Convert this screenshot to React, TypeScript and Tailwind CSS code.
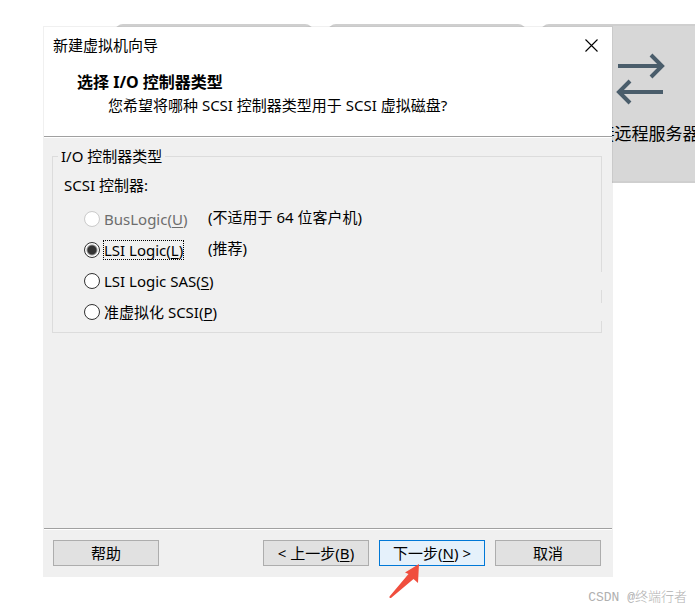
import { useState } from "react";
import type { ReactNode } from "react";

const buttonClassName =
  "h-[26px] w-[106px] shrink-0 border border-[#adadad] bg-[#e1e1e1] text-center leading-6 whitespace-nowrap";

interface ControllerOption {
  value: string;
  label: string;
  accessKey: string;
  note?: string;
  disabled?: boolean;
}

const controllers: ControllerOption[] = [
  {
    value: "buslogic",
    label: "BusLogic",
    accessKey: "U",
    note: "(不适用于 64 位客户机)",
    disabled: true,
  },
  { value: "lsilogic", label: "LSI Logic", accessKey: "L", note: "(推荐)" },
  { value: "lsisas", label: "LSI Logic SAS", accessKey: "S" },
  { value: "pvscsi", label: "准虚拟化 SCSI", accessKey: "P" },
];

function AccessKey({ children }: { children: ReactNode }) {
  return (
    <>
      (<span className="underline underline-offset-2">{children}</span>)
    </>
  );
}

function HomeTiles() {
  const tileClassName =
    "h-[159px] w-[198px] shrink-0 rounded-lg border-y-2 border-[#cfcfcf] bg-[#d7d7d7]";

  return (
    <div className="absolute inset-x-0 top-0 flex gap-[15px] overflow-hidden pt-6 pl-[115px]">
      <div className={tileClassName} />
      <div className={tileClassName} />
      <div className={`${tileClassName} flex flex-col items-center pt-6`}>
        <svg
          width="50"
          height="56"
          viewBox="0 0 50 56"
          fill="none"
          stroke="#4a5d6b"
          strokeWidth="4"
          aria-hidden="true"
        >
          <path d="M3 16H47M36 5l11 11-11 11" />
          <path d="M48 42H4M15 31L4 42l11 11" />
        </svg>
        <span className="mt-[14px] text-[17px] leading-7 text-black">
          连接远程服务器
        </span>
      </div>
    </div>
  );
}

function ControllerGroup() {
  const [selected, setSelected] = useState("lsilogic");

  return (
    <fieldset className="mr-[10px] ml-2 border border-[#dcdcdc] pb-[11px]">
      <legend className="ml-[5px] px-[3px] leading-5">I/O 控制器类型</legend>
      <p className="mt-[9px] ml-[11px] leading-5">SCSI 控制器:</p>
      <div className="mt-[15px] -mr-px ml-[31px] flex flex-col gap-[13px]">
        {controllers.map((item) => (
          <div
            key={item.value}
            className={`flex h-[18px] items-center ${item.note ? "" : "bg-[#f0f0f0]"}`}
          >
            <div className="flex w-[124px] shrink-0 items-center gap-[3px] whitespace-nowrap">
              <input
                id={`controller-${item.value}`}
                type="radio"
                name="controller"
                value={item.value}
                checked={selected === item.value}
                disabled={item.disabled}
                onChange={() => setSelected(item.value)}
                className="size-4 shrink-0 appearance-none rounded-full border border-[#333] bg-white bg-clip-padding outline-none checked:bg-[radial-gradient(circle,#333_4px,white_6px)] disabled:border-[#ccc]"
              />
              <label
                htmlFor={`controller-${item.value}`}
                className={`border border-dotted leading-[18px] ${
                  selected === item.value ? "border-black" : "border-transparent"
                } ${item.disabled ? "text-[#6d6d6d]" : ""}`}
              >
                {item.label}
                <AccessKey>{item.accessKey}</AccessKey>
              </label>
            </div>
            {item.note && <span className="pb-1">{item.note}</span>}
          </div>
        ))}
      </div>
    </fieldset>
  );
}

function ClickArrow() {
  return (
    <svg
      className="pointer-events-none absolute top-6 left-[9px]"
      width="34"
      height="36"
      viewBox="0 0 34 36"
      aria-hidden="true"
    >
      <path
        d="M31 0L17 8.500L20.500 10L1.500 32.500Q1 34.500 3 34L25.500 15L30 19Z"
        fill="#f04e3e"
      />
    </svg>
  );
}

function WizardDialog() {
  return (
    <div
      role="dialog"
      aria-labelledby="wizard-title"
      className="relative mr-[82px] ml-[43px] border border-black/6 bg-[#f0f0f0] bg-clip-padding"
    >
      <header className="border-b border-[#a0a0a0] bg-white pb-[19px]">
        <div className="flex items-center justify-between pt-[7px] pr-[13px] pl-[9px]">
          <h1 id="wizard-title" className="leading-[22px]">
            新建虚拟机向导
          </h1>
          <button type="button" aria-label="关闭" className="p-px">
            <svg
              width="13"
              height="13"
              viewBox="0 0 13 13"
              stroke="black"
              strokeWidth="1.1"
            >
              <path d="M0.500 0.500l12 12M12.500 0.500l-12 12" />
            </svg>
          </button>
        </div>
        <h2 className="mt-[15px] pl-[33px] text-base leading-[22px] font-bold">
          选择 I/O 控制器类型
        </h2>
        <p className="pl-[64px] leading-6">
          您希望将哪种 SCSI 控制器类型用于 SCSI 虚拟磁盘?
        </p>
      </header>
      <main className="border-t border-white pt-2 pb-[195px]">
        <ControllerGroup />
      </main>
      <footer className="border-t border-[#a0a0a0]">
        <div className="flex gap-[10px] border-t border-white pt-[10px] pr-[11px] pb-[10px] pl-[9px]">
          <button type="button" className={`${buttonClassName} mr-auto`}>
            帮助
          </button>
          <button type="button" className={buttonClassName}>
            &lt; 上一步<AccessKey>B</AccessKey>
          </button>
          <div className="relative">
            <button
              type="button"
              className="h-[26px] w-[106px] border border-[#0078d7] bg-[#e5f1fb] text-center leading-6 whitespace-nowrap"
            >
              下一步<AccessKey>N</AccessKey> &gt;
            </button>
            <ClickArrow />
          </div>
          <button type="button" className={buttonClassName}>
            取消
          </button>
        </div>
      </footer>
    </div>
  );
}

export default function App() {
  return (
    <div className="relative min-h-screen bg-white pt-[26px] font-['Noto_Sans','Noto_Sans_CJK_SC',sans-serif] text-[15px] text-black">
      <HomeTiles />
      <WizardDialog />
      <p className="mt-[9px] pr-2 text-right font-['Liberation_Mono','Noto_Sans_CJK_SC',monospace] text-[13px] leading-6 font-light text-[#b0b0b0]">
        CSDN @终端行者
      </p>
    </div>
  );
}
